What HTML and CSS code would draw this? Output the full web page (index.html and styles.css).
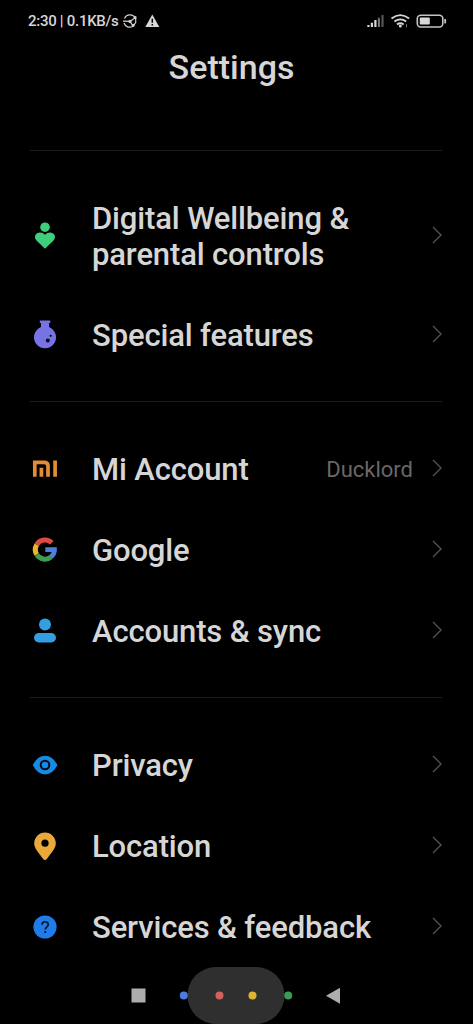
FILE: index.html
```
<!DOCTYPE html>
<html lang="en">
<head>
<meta charset="utf-8">
<title>Settings</title>
<link rel="stylesheet" href="styles.css">
</head>
<body>
<div class="screen">
  <header class="status">
    <span class="status-text">2:30 | 0.1KB/s</span>
    <svg class="status-globe" width="16" height="14" viewBox="0 0 16 14" fill="none" stroke="#d2d2d2" stroke-width="1.2"><path d="M2.5 4.5A6 6 0 0 1 13.4 4.2M2 9A6 6 0 0 0 11 12.2M1 7.2L8 7.4L13.5 3.5M8 7.4L11 12M13.7 2.5V8.5L11 12.3"/><circle cx="8" cy="7.4" r="1" fill="#d2d2d2"/><circle cx="13" cy="3.6" r=".9" fill="#d2d2d2"/><circle cx="11.2" cy="11.2" r=".9" fill="#d2d2d2"/></svg>
    <svg class="status-warn" width="15" height="14" viewBox="0 0 15 14"><path d="M7.3.5L14.3 13H.3Z" fill="#d8d8d8"/><path d="M7.3 4.8V8.8M7.3 10V11.6" stroke="#000" stroke-width="1.5"/></svg>
    <svg class="status-right" width="82" height="16" viewBox="0 0 82 16" fill="none">
      <g stroke-width="2.2"><path d="M2.4 14V12M5.9 14V9.8M9.4 14V7" stroke="#d8d8d8"/><path d="M12.9 14V4.6M16.5 14V2" stroke="#555"/></g>
      <path d="M12.9 14V6" stroke="#999" stroke-width="1"/>
      <g stroke="#d8d8d8" stroke-width="1.9"><path d="M25.5 5.4Q34.3-1.2 43.1 5.4M28.4 8.6Q34.3 4.2 40.2 8.6M31 11.4Q34.3 9 37.6 11.4"/></g>
      <circle cx="34.3" cy="13" r="1.5" fill="#d8d8d8"/><path d="M40.5 11V14.5" stroke="#666" stroke-width="1"/>
      <rect x="51.3" y="2.2" width="25.5" height="11.8" rx="3.4" stroke="#c4c4c4" stroke-width="1.6"/>
      <rect x="53.8" y="4.6" width="10" height="7" rx="1" fill="#d8d8d8"/><path d="M79.2 6V10.4" stroke="#c4c4c4" stroke-width="1.8"/>
    </svg>
  </header>
  <h1 class="title">Settings</h1>
  <main class="list">
    <section class="group">
      <div class="row row-tall">
        <svg class="icon" viewBox="0 0 36 36" fill="#3fce7c"><circle cx="18" cy="9.2" r="4.8"/><path d="M18 30.7L9.7 22.8C5.9 18.7 9 14.4 13 14.4Q16 14.4 18 16.7Q20 14.4 23 14.4C27 14.4 30.1 18.7 26.3 22.8Z"/></svg>
        <span class="label">Digital Wellbeing &amp;<br>parental controls</span>
        <svg class="chevron" viewBox="0 0 10 18"><path d="M1 1L9 9L1 17"/></svg>
      </div>
      <div class="row">
        <svg class="icon" viewBox="0 0 36 36" fill="#7773e4"><path d="M12.8 3.5H23.3V6H22V10.1A11 11 0 1 1 14 10.1V6H12.8Z"/><g fill="#080814"><circle cx="20.8" cy="23.5" r="2"/><circle cx="23.7" cy="18.8" r="1.1"/></g></svg>
        <span class="label">Special features</span>
        <svg class="chevron" viewBox="0 0 10 18"><path d="M1 1L9 9L1 17"/></svg>
      </div>
    </section>
    <section class="group">
      <div class="row">
        <svg class="icon" viewBox="0 0 36 36" fill="none" stroke="#e68b35" stroke-width="3.7"><path d="M7.8 25.7V11.3H17.3Q21 11.3 21 15V25.7M14.4 16.8V25.7M28.1 9.5V25.7"/></svg>
        <span class="label">Mi Account</span>
        <span class="value">Ducklord</span>
        <svg class="chevron" viewBox="0 0 10 18"><path d="M1 1L9 9L1 17"/></svg>
      </div>
      <div class="row">
        <svg class="icon" viewBox="0 0 36 36" fill="none" stroke-width="5"><path d="M9.7 12.7A9.6 9.6 0 0 1 24.8 10.8" stroke="#dc4b40"/><path d="M9.7 22.5A9.6 9.6 0 0 1 9.7 12.7" stroke="#e9b62c"/><path d="M24.2 24.8A9.6 9.6 0 0 1 9.7 22.5" stroke="#3b9f50"/><path d="M18.3 15.3H29.8Q30.6 22.3 25.8 26.6L21.9 23.4Q24 22.1 24.6 20H18.3Z" fill="#4b7fe0" stroke="none"/></svg>
        <span class="label">Google</span>
        <svg class="chevron" viewBox="0 0 10 18"><path d="M1 1L9 9L1 17"/></svg>
      </div>
      <div class="row">
        <svg class="icon" viewBox="0 0 36 36" fill="#339fe2"><circle cx="18" cy="11.5" r="6"/><rect x="7" y="20" width="22" height="9.4" rx="4.7"/></svg>
        <span class="label">Accounts &amp; sync</span>
        <svg class="chevron" viewBox="0 0 10 18"><path d="M1 1L9 9L1 17"/></svg>
      </div>
    </section>
    <section class="group">
      <div class="row">
        <svg class="icon" viewBox="0 0 36 36" fill="#158be4"><path d="M5.7 18.1Q10.5 8.8 18 8.8T30.5 18.1Q25.6 27.5 18 27.5T5.7 18.1Z"/><circle cx="18" cy="18" r="4.3" stroke="#020b18" stroke-width="2"/></svg>
        <span class="label">Privacy</span>
        <svg class="chevron" viewBox="0 0 10 18"><path d="M1 1L9 9L1 17"/></svg>
      </div>
      <div class="row">
        <svg class="icon" viewBox="0 0 36 36"><path d="M18 32Q16.8 32 15.8 30.4C12.5 25.5 7.2 20.5 7.2 15.4A10.8 10.8 0 0 1 28.8 15.4C28.8 20.5 23.5 25.5 20.2 30.4Q19.2 32 18 32Z" fill="#e9a93b"/><circle cx="18" cy="15.2" r="3.6"/></svg>
        <span class="label">Location</span>
        <svg class="chevron" viewBox="0 0 10 18"><path d="M1 1L9 9L1 17"/></svg>
      </div>
      <div class="row">
        <svg class="icon" viewBox="0 0 36 36"><circle cx="18" cy="18" r="11.6" fill="#1f7ce8"/><path d="M15 15.8C15 11.8 21.3 11.8 21.3 15.6C21.3 17.9 18.2 18.2 18.2 20.6" fill="none" stroke="#06142c" stroke-width="1.7"/><circle cx="18.2" cy="23" r="1.1" fill="#06142c"/></svg>
        <span class="label">Services &amp; feedback</span>
        <svg class="chevron" viewBox="0 0 10 18"><path d="M1 1L9 9L1 17"/></svg>
      </div>
    </section>
  </main>
  <nav class="nav">
    <svg width="473" height="57" viewBox="0 0 473 57"><rect x="131.5" y="21.5" width="14" height="14" fill="#adadad"/><rect x="187.5" y="0" width="97" height="57" rx="28.5" fill="#2f2f2f"/><circle cx="183.8" cy="28.6" r="4" fill="#4b7de0"/><circle cx="219.5" cy="28.6" r="4" fill="#d2625b"/><circle cx="252.5" cy="28.6" r="4" fill="#dfb535"/><circle cx="288.2" cy="28.6" r="4" fill="#3a9c57"/><path d="M326 28.7L340 20.8V36.7Z" fill="#adadad"/></svg>
  </nav>
</div>
</body>
</html>
```
FILE: styles.css
```
body {
  margin: 0;
  background: #000;
  font-family: Roboto, "Liberation Sans", sans-serif;
}
.screen {
  display: flex;
  flex-direction: column;
  height: 1024px;
  overflow: hidden;
  background: #000;
  color: #d6d6d6;
}
.status {
  display: flex;
  align-items: center;
  height: 42px;
  padding: 0 25px 0 28px;
  box-sizing: border-box;
  flex: none;
}
.status-text {
  font-size: 15px;
  font-weight: 500;
  letter-spacing: -0.28px;
  line-height: 20px;
  white-space: nowrap;
}
.status-globe { margin-left: 3px; }
.status-warn { margin-left: 7px; }
.status-right { margin-left: auto; }
.title {
  margin: 0;
  height: 108px;
  padding-top: 4px;
  padding-right: 10px;
  box-sizing: border-box;
  flex: none;
  font-size: 34px;
  font-weight: 500;
  line-height: 42px;
  text-align: center;
}
.list { height: 817px; flex: none; }
.group {
  margin: 0 31px 0 30px;
  padding: 26px 0;
  border-top: 1px solid #1c1c1c;
}
.row {
  display: flex;
  align-items: center;
  height: 81px;
}
.row-tall { height: 117px; }
.icon {
  width: 36px;
  height: 36px;
  margin-left: -3px;
  flex: none;
}
.label {
  flex: 1;
  margin-left: 29px;
  padding-top: 3px;
  font-size: 31px;
  font-weight: 500;
  letter-spacing: -0.14px;
  line-height: 36px;
  white-space: nowrap;
}
.value {
  margin-right: 19px;
  padding-top: 2px;
  color: #686868;
  font-size: 22px;
}
.chevron {
  width: 10px;
  height: 18px;
  margin-bottom: 1px;
  flex: none;
  fill: none;
  stroke: #515151;
  stroke-width: 1.4;
}
.nav {
  height: 57px;
  flex: none;
}
.nav svg { display: block; }
```
